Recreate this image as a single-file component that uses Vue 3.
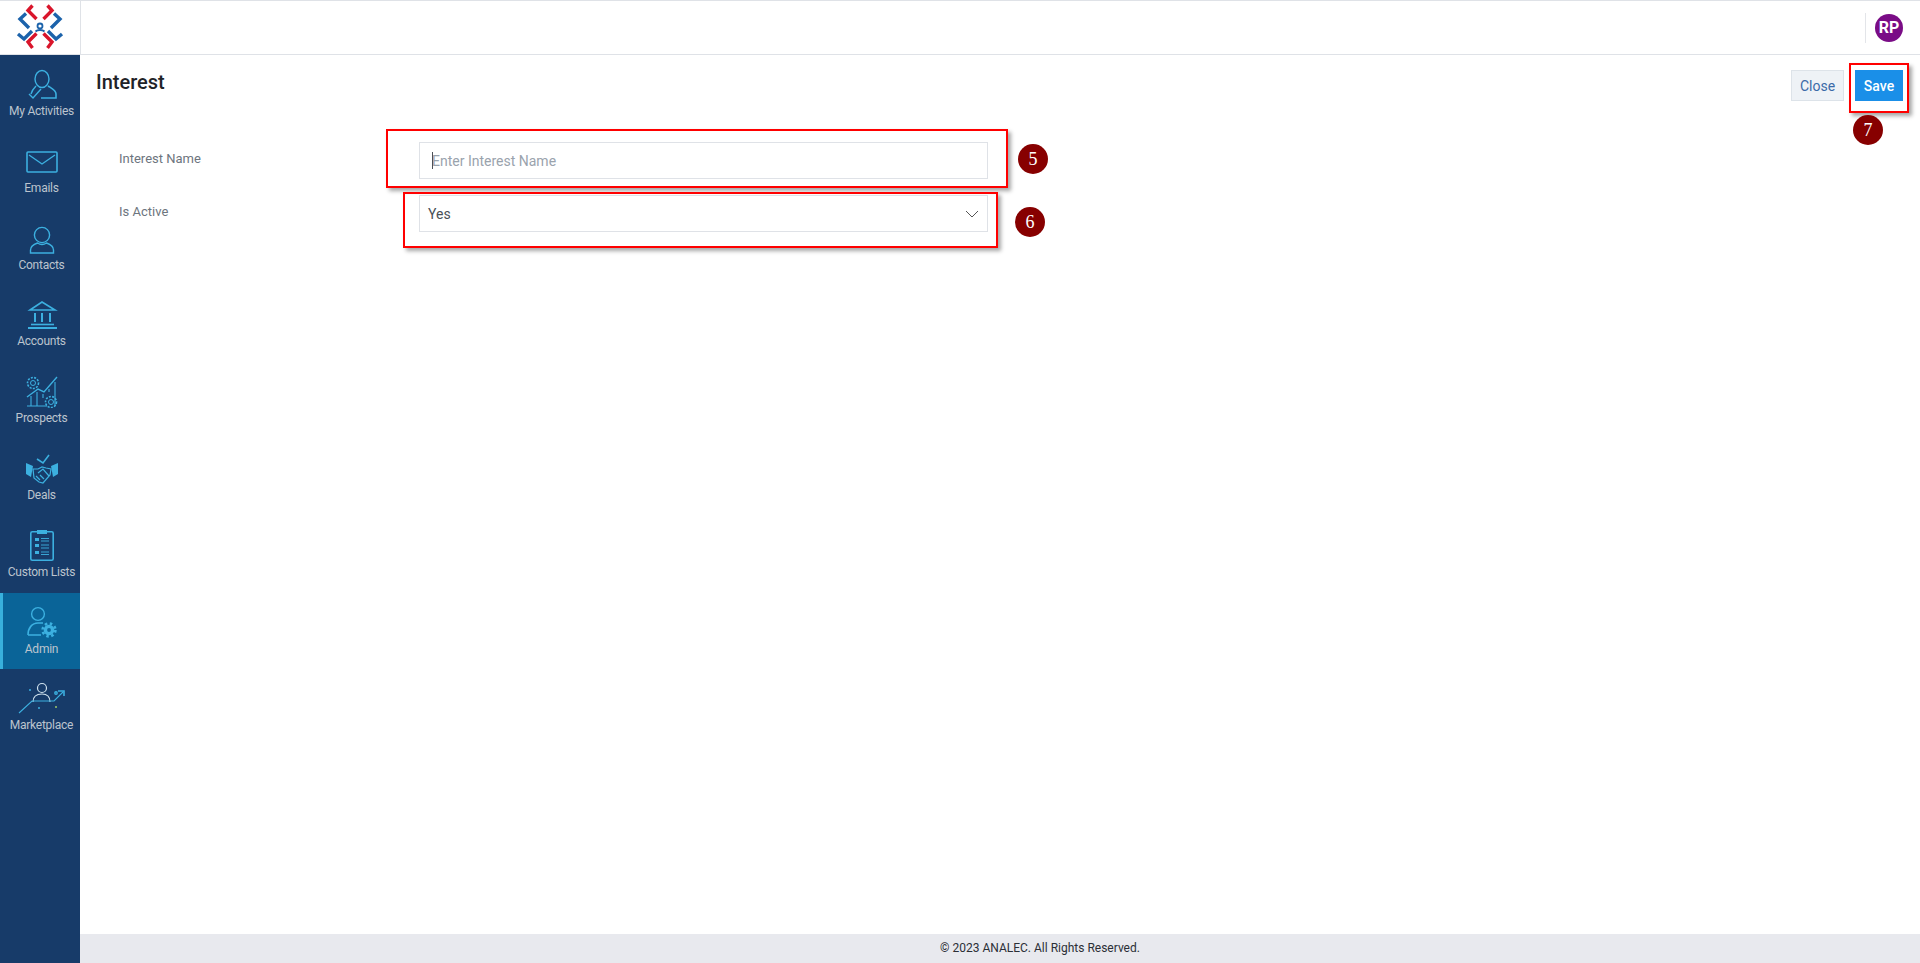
<template>
  <div class="app">
    <header class="topbar">
      <div class="logo">
        <svg width="52" height="52" viewBox="0 0 52 52" fill="none">
          <g transform="translate(-14,-2.5)" stroke-width="3.4">
            <g stroke="#d9152b">
              <path d="M32.500 6l-4.500 5 8.500 8.500" />
              <path d="M47.500 6l4.500 5-8.500 8.500" />
              <path d="M36.500 34l-8.500 8.500 4.500 6" />
              <path d="M43.500 34l8.500 8.500-4.500 6" />
            </g>
            <g stroke="#1c63ab">
              <path d="M26 14l-6 5.500 9 9" />
              <path d="M54 14l6 5.500-9 9" />
              <path d="M18 34.500l6 5 8-8" />
              <path d="M62 34.500l-6 5-8-8" />
            </g>
            <circle cx="40" cy="26.500" r="2.500" stroke="#1c63ab" stroke-width="1.800" />
            <path d="M35.500 32c2-2 7-2 9 0" stroke="#1c63ab" stroke-width="1.800" />
          </g>
        </svg>
      </div>
      <div class="topbar-right">
        <div class="avatar">RP</div>
      </div>
    </header>

    <div class="body">
      <nav class="sidebar">
        <a v-for="item in navItems" :key="item.label" class="nav-item" :class="{ active: item.active }">
          <svg class="nav-icon" width="60" height="46" viewBox="0 0 60 46" fill="none" stroke="#3cb0e0" stroke-width="1.4">
            <g v-if="item.icon === 'activities'">
              <ellipse cx="32" cy="24" rx="7" ry="8.5" />
              <path d="M26 31c-2 2-4 4-5 8" />
              <path d="M38 31c3 2 8 4 8 8v4H31" stroke-width="1.6" />
              <path d="M19 39l4 4 8-9" />
            </g>
            <g v-else-if="item.icon === 'emails'">
              <rect x="17" y="20" width="30" height="20" rx="1" stroke-width="1.6" />
              <path d="M19 23l13 9 13-9" />
            </g>
            <g v-else-if="item.icon === 'contacts'">
              <circle cx="32" cy="26" r="7.6" />
              <path d="M20.500 44v-3c0-4 4-6 7-7 3 2 6 2 9 0 3 1 7 3 7 7v3z" />
            </g>
            <g v-else-if="item.icon === 'accounts'">
              <path d="M20 25l12-8 13 8z" stroke-width="1.6" />
              <path d="M25 28v9M32 28v9M40 28v9" stroke-width="2" />
              <path d="M21 39.500h23" stroke-width="1.6" />
              <path d="M18 43h29" stroke-width="2" />
            </g>
            <g v-else-if="item.icon === 'prospects'">
              <circle cx="23" cy="21" r="2.500" stroke-width="1" />
              <circle cx="23" cy="21" r="5.500" stroke-width="1.600" stroke-dasharray="2 1.300" />
              <path d="M17 35l11-8 6 3 13-15" />
              <path d="M21 44V34M27 44V30M33 36v-4M39 30v-3M45 44V20M17 44h20" stroke-width="1.100" />
              <circle cx="41" cy="40" r="2.500" stroke-width="1" />
              <circle cx="41" cy="40" r="5.500" stroke-width="1.600" stroke-dasharray="2 1.300" />
            </g>
            <g v-else-if="item.icon === 'deals'">
              <path d="M27 20l6 4 6-8" stroke-width="1.600" />
              <path d="M16 24l7 3-2 11-5-3zM48 24l-7 3 2 11 5-3z" fill="#3cb0e0" stroke="none" />
              <path d="M23 30h5l4-2 4 1 5 1-1 6-7 8-4-1-5-4z" stroke-width="1.200" />
              <path d="M28 34l5-4 6 7M26 37l4 4M30 36l4 4" stroke-width="1.200" />
            </g>
            <g v-else-if="item.icon === 'lists'">
              <rect x="20.800" y="15.800" width="22.400" height="28.400" rx="1.500" stroke-width="1.600" />
              <rect x="27" y="14" width="10" height="4" fill="#3cb0e0" stroke="none" />
              <path d="M25 22h4v3h-4zM25 28h4v3h-4zM25 35h4v3h-4z" fill="#3cb0e0" stroke="none" />
              <path d="M31 22.500h8M31 25h8M31 29h8M31 32h8M31 36h8M31 38.500h8" stroke-width="0.900" />
            </g>
            <g v-else-if="item.icon === 'admin'">
              <circle cx="28" cy="21" r="6.400" />
              <path d="M18 42c0-7 4-12 10-12h5M18 42h13" stroke-width="1.600" />
              <circle cx="39" cy="37" r="3.600" stroke-width="3.400" />
              <circle cx="39" cy="37" r="6.400" stroke-width="2.600" stroke-dasharray="2.500 2.530" />
            </g>
            <g v-else-if="item.icon === 'marketplace'">
              <circle cx="32" cy="19" r="4.500" stroke="#cfe2ee" stroke-width="1.200" />
              <path d="M23 33c0-6 4-8 9-8s8 3 8 8" stroke="#cfe2ee" stroke-width="1.200" />
              <path d="M9 44l13-12h22l9-9" stroke-width="1.100" />
              <path d="M48 22h6v5" stroke-width="1.600" />
              <circle cx="20" cy="21" r="1" fill="#3cb0e0" stroke="none" />
              <circle cx="46" cy="24" r="1.200" />
              <circle cx="29" cy="39" r="1" fill="#3cb0e0" stroke="none" />
              <circle cx="46" cy="38" r="1" fill="#9ec96a" stroke="none" />
            </g>
          </svg>
          <span class="nav-label">{{ item.label }}</span>
        </a>
      </nav>

      <main class="main">
        <div class="page-head">
          <h1>Interest</h1>
          <div class="actions">
            <button class="btn btn-close">Close</button>
            <button class="btn btn-save">Save</button>
          </div>
        </div>

        <form class="form" @submit.prevent>
          <label class="form-label">Interest Name</label>
          <div class="field">
            <input class="control" type="text" placeholder="Enter Interest Name" />
            <span class="caret"></span>
          </div>
          <label class="form-label">Is Active</label>
          <div class="control select">
            <span>Yes</span>
            <svg width="14" height="8" viewBox="0 0 14 8" fill="none" stroke="#555" stroke-width="1">
              <path d="M1 1l6 6 6-6" />
            </svg>
          </div>
        </form>

        <footer class="footer">© 2023 ANALEC. All Rights Reserved.</footer>
      </main>
    </div>

    <!-- callouts drawn over the screen -->
    <div v-for="(b, i) in callouts" :key="'c' + i" class="callout" :style="boxStyle(b)"></div>
    <div v-for="n in badges" :key="n.text" class="badge" :style="{ left: n.x + 'px', top: n.y + 'px' }">{{ n.text }}</div>
  </div>
</template>

<script setup>
const navItems = [
  { label: 'My Activities', icon: 'activities' },
  { label: 'Emails', icon: 'emails' },
  { label: 'Contacts', icon: 'contacts' },
  { label: 'Accounts', icon: 'accounts' },
  { label: 'Prospects', icon: 'prospects' },
  { label: 'Deals', icon: 'deals' },
  { label: 'Custom Lists', icon: 'lists' },
  { label: 'Admin', icon: 'admin', active: true },
  { label: 'Marketplace', icon: 'marketplace' }
]

const callouts = [
  { x: 386, y: 129, w: 622, h: 59 },
  { x: 403, y: 192, w: 595, h: 56 },
  { x: 1849, y: 63, w: 60, h: 50 }
]

const badges = [
  { text: '5', x: 1018, y: 144 },
  { text: '6', x: 1015, y: 207 },
  { text: '7', x: 1853, y: 115 }
]

function boxStyle(b) {
  return {
    left: b.x + 'px',
    top: b.y + 'px',
    width: b.w + 'px',
    height: b.h + 'px'
  }
}
</script>

<style>
html, body { margin: 0; background: #fff; }
</style>

<style scoped>
.app {
  position: relative;
  height: 963px;
  overflow: hidden;
  display: flex;
  flex-direction: column;
  font-family: Roboto, "Liberation Sans", sans-serif;
  color: #212529;
}

.topbar {
  flex: none;
  height: 55px;
  box-sizing: border-box;
  display: flex;
  border-top: 1px solid #dfe2e7;
  border-bottom: 1px solid #dfe2e7;
}
.logo {
  width: 81px;
  box-sizing: border-box;
  border-right: 1px solid #dfe2e7;
  display: flex;
  align-items: center;
  justify-content: center;
}
.topbar-right {
  flex: 1;
  display: flex;
  align-items: center;
  justify-content: flex-end;
  padding-right: 17px;
}
.avatar {
  width: 28px;
  height: 28px;
  margin-left: 9px;
  border-radius: 50%;
  background: #7a0c86;
  color: #fff;
  font-size: 16px;
  font-weight: 700;
  line-height: 28px;
  text-align: center;
  position: relative;
}
.avatar::before {
  content: "";
  position: absolute;
  left: -10px;
  top: -1px;
  height: 30px;
  width: 1px;
  background: #e3e5e9;
}

.body { flex: 1; display: flex; min-height: 0; }

.sidebar {
  flex: none;
  width: 80px;
  background: #173b69;
}
.nav-item {
  height: 76.8px;
  box-sizing: border-box;
  display: flex;
  flex-direction: column;
  align-items: center;
  position: relative;
}
.nav-item.active { background: #0a6498; }
.nav-item.active::before {
  content: "";
  position: absolute;
  left: 0;
  top: 0;
  bottom: 0;
  width: 3px;
  background: #38b0dc;
}
.nav-icon { display: block; flex: none; margin-bottom: 2px; }
.nav-label {
  margin-left: 3px;
  font-size: 12px;
  letter-spacing: -0.25px;
  line-height: 16px;
  color: #bcc4ce;
  white-space: nowrap;
}

.main { flex: 1; min-width: 0; display: flex; flex-direction: column; }

.page-head {
  flex: none;
  display: flex;
  justify-content: space-between;
  align-items: flex-start;
  padding: 15px 17px 0 16px;
}
.page-head h1 {
  margin: 0;
  font-size: 20px;
  line-height: 24px;
  font-weight: 500;
  color: #1f2328;
}
.actions { display: flex; gap: 11px; }
.btn {
  height: 31px;
  box-sizing: border-box;
  font-family: inherit;
  font-size: 14px;
  border-radius: 0;
  padding: 0;
}
.btn-close {
  width: 53px;
  background: #eef2f6;
  border: 1px solid #dde3e9;
  color: #3b6aa8;
}
.btn-save {
  width: 48px;
  background: #1a8fe8;
  border: 1px solid #1a8fe8;
  color: #fff;
  font-weight: 500;
}

.form {
  flex: 1;
  display: grid;
  grid-template-columns: 300px 569px;
  grid-auto-rows: 37px;
  row-gap: 16px;
  align-content: start;
  padding: 41px 0 0 39px;
}
.form-label {
  font-size: 13px;
  line-height: 18px;
  padding-top: 8px;
  color: #6d757e;
}
.field { position: relative; }
.control {
  width: 100%;
  height: 37px;
  box-sizing: border-box;
  border: 1px solid #dfe2e7;
  border-radius: 0;
  background: #fff;
  font-family: inherit;
  font-size: 14px;
  color: #495057;
  outline: none;
}
input.control { padding: 0 12px; }
input.control::placeholder { color: #9aa3ad; opacity: 1; }
.caret {
  position: absolute;
  left: 13px;
  top: 10px;
  width: 1px;
  height: 17px;
  background: #4a5058;
}
.select {
  display: flex;
  align-items: center;
  justify-content: space-between;
  padding: 0 8px;
}

.footer {
  flex: none;
  height: 29px;
  box-sizing: border-box;
  padding-left: 80px;
  background: #e8e9ee;
  font-size: 12px;
  line-height: 29px;
  text-align: center;
  color: #2b2f36;
}

.callout {
  position: absolute;
  box-sizing: border-box;
  border: 2px solid #f00;
  box-shadow: 3px 3px 4px rgba(0, 0, 0, 0.35);
  pointer-events: none;
}
.badge {
  position: absolute;
  width: 30px;
  height: 30px;
  border-radius: 50%;
  background: #870000;
  color: #fff;
  font-family: "Liberation Serif", serif;
  font-size: 18px;
  line-height: 30px;
  text-align: center;
}
</style>
